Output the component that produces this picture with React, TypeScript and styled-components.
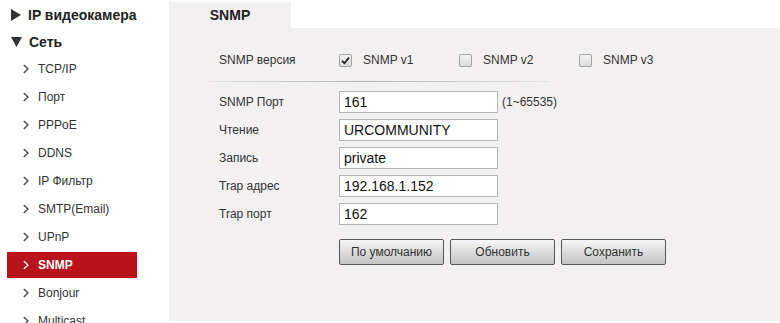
import React from "react";
import styled, { createGlobalStyle } from "styled-components";

const Global = createGlobalStyle`
  html, body {
    margin: 0;
    padding: 0;
    background: #fff;
    font-family: "Liberation Sans", Arial, sans-serif;
    color: #333;
  }
`;

const Page = styled.div`
  display: flex;
  width: 780px;
  height: 323px;
  overflow: hidden;
`;

const Sidebar = styled.nav`
  width: 169px;
  flex-shrink: 0;
  padding: 4px 0 0 7px;
  box-sizing: border-box;
`;

const Group = styled.div`
  display: flex;
  align-items: center;
  gap: 7px;
  height: 22px;
  padding-left: 4px;
  font-size: 14px;
  font-weight: bold;
  color: #222;
  margin-bottom: 5px;
`;

const SubList = styled.div`
  display: flex;
  flex-direction: column;
  gap: 2px;
  margin-top: -2px;
`;

const SubItem = styled.div<{ $active?: boolean }>`
  display: flex;
  align-items: center;
  gap: 9px;
  width: 130px;
  height: 26px;
  padding-left: 16px;
  box-sizing: border-box;
  font-size: 12px;
  background: ${(p) => (p.$active ? "#b8121b" : "transparent")};
  color: ${(p) => (p.$active ? "#fff" : "#333")};
  font-weight: ${(p) => (p.$active ? "bold" : "normal")};
`;

const Main = styled.main`
  flex: 1;
  display: flex;
  flex-direction: column;
  padding-top: 2px;
`;

const Tab = styled.div`
  width: 122px;
  height: 26px;
  background: #f2f0f1;
  display: flex;
  align-items: center;
  justify-content: center;
  font-size: 14px;
  font-weight: bold;
  color: #222;
`;

const Panel = styled.section`
  background: #f2f0f1;
  height: 293px;
  padding: 22px 0 0 50px;
  box-sizing: border-box;
`;

const VersionRow = styled.div`
  display: flex;
  align-items: center;
  height: 20px;
  font-size: 12px;
`;

const RowLabel = styled.div`
  width: 120px;
  flex-shrink: 0;
  font-size: 12px;
  color: #333;
`;

const Option = styled.label`
  display: flex;
  align-items: center;
  gap: 11px;
  width: 120px;
`;

const Box = styled.span<{ $checked?: boolean }>`
  width: 11px;
  height: 11px;
  border: 1px solid #a4a4a4;
  border-radius: 2px;
  background: linear-gradient(#f4f4f4, #dadada);
  display: flex;
  align-items: center;
  justify-content: center;
`;

const Divider = styled.div`
  width: 340px;
  height: 1px;
  margin: 11px 0 9px -10px;
  background: linear-gradient(
    to right,
    rgba(170, 170, 170, 0.2),
    #b3b3b3 45%,
    rgba(200, 200, 200, 0.3)
  );
`;

const Form = styled.div`
  display: flex;
  flex-direction: column;
  gap: 6px;
`;

const FieldRow = styled.div`
  display: flex;
  align-items: center;
  height: 22px;
`;

const Input = styled.input`
  width: 159px;
  height: 22px;
  box-sizing: border-box;
  border: 1px solid #b5b5b5;
  background: #fff;
  padding: 0 4px;
  font-family: "Liberation Sans", Arial, sans-serif;
  font-size: 14px;
  color: #111;
  outline: none;
`;

const Hint = styled.span`
  margin-left: 4px;
  font-size: 12px;
  color: #333;
`;

const Buttons = styled.div`
  display: flex;
  gap: 6px;
  margin: 14px 0 0 120px;
`;

const Button = styled.button`
  width: 105px;
  height: 26px;
  border: 1px solid #555;
  border-radius: 2px;
  background: linear-gradient(#f7f7f7, #dcdcdc 50%, #c4c4c4);
  font-family: "Liberation Sans", Arial, sans-serif;
  font-size: 12px;
  color: #333;
  padding: 0;
  cursor: pointer;
`;

const Chevron = ({ color }: { color: string }) => (
  <svg width="6" height="10" viewBox="0 0 6 10">
    <path d="M0.8 1 L5 5 L0.8 9" fill="none" stroke={color} strokeWidth="1.3" />
  </svg>
);

const Triangle = ({ down }: { down?: boolean }) =>
  down ? (
    <svg width="11" height="10" viewBox="0 0 11 10">
      <path d="M0 0 H11 L5.5 10 Z" fill="#333" />
    </svg>
  ) : (
    <svg width="10" height="12" viewBox="0 0 10 12">
      <path d="M0 0 L10 6 L0 12 Z" fill="#333" />
    </svg>
  );

const Check = () => (
  <svg width="9" height="9" viewBox="0 0 9 9">
    <path d="M1 4.8 L3.4 7.2 L8 1.6" fill="none" stroke="#222" strokeWidth="1.8" />
  </svg>
);

const menu = [
  "TCP/IP",
  "Порт",
  "PPPoE",
  "DDNS",
  "IP Фильтр",
  "SMTP(Email)",
  "UPnP",
  "SNMP",
  "Bonjour",
  "Multicast",
];

const fields = [
  { label: "SNMP Порт", value: "161", hint: "(1~65535)" },
  { label: "Чтение", value: "URCOMMUNITY" },
  { label: "Запись", value: "private" },
  { label: "Trap адрес", value: "192.168.1.152" },
  { label: "Trap порт", value: "162" },
];

const versions = [
  { name: "SNMP v1", checked: true },
  { name: "SNMP v2", checked: false },
  { name: "SNMP v3", checked: false },
];

export default function App() {
  return (
    <Page>
      <Global />
      <Sidebar>
        <Group>
          <Triangle />
          IP видеокамера
        </Group>
        <Group>
          <Triangle down />
          Сеть
        </Group>
        <SubList>
          {menu.map((m) => (
            <SubItem key={m} $active={m === "SNMP"}>
              <Chevron color={m === "SNMP" ? "#fff" : "#444"} />
              {m}
            </SubItem>
          ))}
        </SubList>
      </Sidebar>
      <Main>
        <Tab>SNMP</Tab>
        <Panel>
          <VersionRow>
            <RowLabel>SNMP версия</RowLabel>
            {versions.map((v) => (
              <Option key={v.name}>
                <Box $checked={v.checked}>{v.checked && <Check />}</Box>
                {v.name}
              </Option>
            ))}
          </VersionRow>
          <Divider />
          <Form>
            {fields.map((f) => (
              <FieldRow key={f.label}>
                <RowLabel>{f.label}</RowLabel>
                <Input defaultValue={f.value} />
                {f.hint && <Hint>{f.hint}</Hint>}
              </FieldRow>
            ))}
          </Form>
          <Buttons>
            <Button>По умолчанию</Button>
            <Button>Обновить</Button>
            <Button>Сохранить</Button>
          </Buttons>
        </Panel>
      </Main>
    </Page>
  );
}
